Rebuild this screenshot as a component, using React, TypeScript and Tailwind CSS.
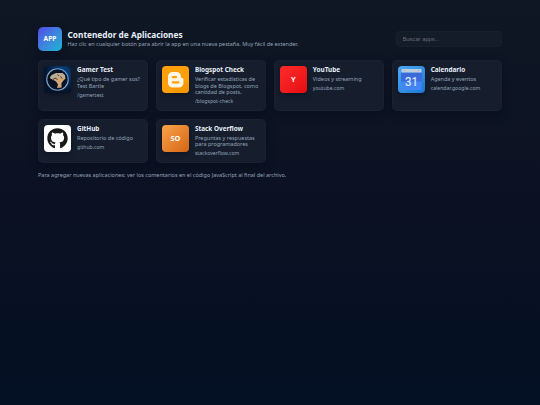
import React from "react";
import { FaGithub } from "react-icons/fa";

const iconBox =
  "flex h-[27px] w-[27px] shrink-0 items-center justify-center overflow-hidden rounded-[4px] text-[7.4px] font-bold text-white shadow-[0_2px_5px_rgba(2,6,23,0.4)]";

function GamerIcon() {
  return (
    <div className={iconBox + " bg-[#03152f]"}>
      <svg viewBox="0 0 54 54" className="h-full w-full">
        <defs>
          <radialGradient id="glow" cx="0.65" cy="0.3" r="0.65">
            <stop offset="0" stopColor="#0d5298" />
            <stop offset="0.65" stopColor="#062850" />
            <stop offset="1" stopColor="#03142a" />
          </radialGradient>
          <linearGradient id="ring" x1="1" y1="0" x2="0" y2="1">
            <stop offset="0" stopColor="#3c8ce0" />
            <stop offset="0.5" stopColor="#8fa9c8" />
            <stop offset="1" stopColor="#6d8db3" />
          </linearGradient>
        </defs>
        <rect width="54" height="54" fill="url(#glow)" />
        <circle cx="27" cy="27" r="21.5" fill="#071325" stroke="url(#ring)" strokeWidth="2.4" />
        <path d="M12 24 C15 18 20 17 25 14 L37 14 L42 19 L43 25 L39 29 L35 34 L35 43 L26 44 L28 37 L24 31 L17 27Z" fill="#d0a678" />
        <path d="M12 24 C13 18 19 16 25 14 L37 14 L42 19 L41 23 L33 22 L25 24 L17 27Z" fill="#b8ab93" />
        <path d="M17 28 L22 24 L27 27 M33 21 L36 25 M27 17 L30 20" fill="none" stroke="#4a382b" strokeWidth="2" />
      </svg>
    </div>
  );
}

function BloggerIcon() {
  return (
    <div className={iconBox + " bg-[#ffa00a]"}>
      <svg viewBox="0 0 54 54" className="h-full w-full">
        <path d="M15 41 L28 54 H54 V37 L42 27 L38 43Z" fill="#f99700" />
        <path
          fillRule="evenodd"
          fill="#fff6e6"
          d="M21 12 H29 A9 9 0 0 1 38 21 V22 Q38 24 40 24 H40.5 Q43 24 43 27 V34 A9 9 0 0 1 34 43 H21 A9 9 0 0 1 12 34 V21 A9 9 0 0 1 21 12Z M21.5 20 A2.2 2.2 0 0 0 21.5 24.4 H28 A2.2 2.2 0 0 0 28 20Z M21.5 30.6 A2.2 2.2 0 0 0 21.5 35 H33 A2.2 2.2 0 0 0 33 30.6Z"
        />
      </svg>
    </div>
  );
}

function CalendarIcon() {
  return (
    <div className={iconBox + " bg-linear-to-br from-[#4caaf5] to-[#1976d2]"}>
      <svg viewBox="0 0 54 54" className="h-full w-full">
        <path d="M7 13 H47 V46 Q47 48 45 48 H9 Q7 48 7 46Z" fill="#4285f4" />
        <path d="M6 13 H48 V31 H6Z" fill="#3b6bda" />
        <path d="M9 6 H45 Q47 6 47 8 V13 H7 V8 Q7 6 9 6Z" fill="#c0cedc" />
        <circle cx="13" cy="9" r="1.2" fill="#8ea7c2" />
        <circle cx="41" cy="9" r="1.2" fill="#8ea7c2" />
        <text x="27" y="40.5" textAnchor="middle" textLength="26" lengthAdjust="spacingAndGlyphs" fill="#dce7fa" stroke="#dce7fa" strokeWidth="0.4" fontFamily="Roboto, sans-serif" fontSize="27" fontWeight="400">31</text>
      </svg>
    </div>
  );
}

interface AppEntry {
  title: string;
  desc: string;
  url: string;
  icon: React.ReactNode;
}

const apps: AppEntry[] = [
  { title: "Gamer Test", desc: "¿Qué tipo de gamer sos? Test Bartle", url: "/gamertest", icon: <GamerIcon /> },
  { title: "Blogspot Check", desc: "Verificar estadísticas de blogs de Blogspot, como cantidad de posts,", url: "/blogspot-check", icon: <BloggerIcon /> },
  { title: "YouTube", desc: "Videos y streaming", url: "youtube.com", icon: <div className={iconBox + " bg-linear-to-br from-[#ff2a2a] to-[#e50b12]"}>Y</div> },
  { title: "Calendario", desc: "Agenda y eventos", url: "calendar.google.com", icon: <CalendarIcon /> },
  { title: "GitHub", desc: "Repositorio de código", url: "github.com", icon: <div className={iconBox + " bg-white"}><FaGithub className="h-[21px] w-[21px] text-[#181818]" /></div> },
  { title: "Stack Overflow", desc: "Preguntas y respuestas para programadores", url: "stackoverflow.com", icon: <div className={iconBox + " bg-linear-to-br from-[#faa34b] to-[#d4650d]"}>SO</div> },
];

function Card({ app }: { app: AppEntry }) {
  return (
    <a className="flex items-start gap-[6px] rounded-[5px] border border-white/[0.02] bg-[#161e2d] p-[5px] shadow-[0_3px_8px_rgba(2,6,23,0.35)]">
      {app.icon}
      <div className="-mr-1 min-w-0 flex-1">
        <h2 className="text-[6.4px] leading-[8.5px] font-bold text-[#e6eef8]">{app.title}</h2>
        <p className="mt-[1.5px] text-[5.46px] leading-[6.6px] text-[#94a3b8]">{app.desc}</p>
        <p className="mt-[2.4px] text-[5.1px] leading-[7px] text-[#94a3b8]">{app.url}</p>
      </div>
    </a>
  );
}

export default function App() {
  return (
    <div className="h-[405px] w-[540px] overflow-hidden bg-linear-to-b from-[#0f1724] via-[#0b1122] to-[#041024] px-[38px] pt-[27px] font-['Noto_Sans',sans-serif]">
      <header className="flex h-6 items-center justify-between">
        <div className="flex items-center gap-[5.5px]">
          <div className="flex h-6 w-6 items-center justify-center rounded-[5px] bg-linear-to-br from-[#4f46e5] to-[#06b6d4] text-[6.6px] font-bold text-white shadow-[0_2px_7px_rgba(2,6,23,0.5)]">APP</div>
          <div>
            <h1 className="text-[8.3px] leading-[10px] font-bold text-[#e6eef8]">Contenedor de Aplicaciones</h1>
            <p className="mt-[0.5px] text-[5.49px] leading-[8px] text-[#94a3b8]">Haz clic en cualquier botón para abrir la app en una nueva pestaña. Muy fácil de extender.</p>
          </div>
        </div>
        <input
          placeholder="Buscar apps..."
          className="h-4 w-[106px] rounded-[4.5px] border border-white/[0.02] bg-[#141c29] px-[5.5px] text-[5.8px] font-['Liberation_Sans',sans-serif] text-[#94a3b8] outline-none placeholder:text-[#686e78]"
        />
      </header>
      <main className="mt-[9px] grid grid-cols-4 grid-rows-[51px_44px] gap-[7.6px]">
        {apps.map((app) => (
          <Card key={app.title} app={app} />
        ))}
      </main>
      <footer className="mt-[8px] text-[5.49px] leading-[8px] text-[#94a3b8]">
        Para agregar nuevas aplicaciones: ver los comentarios en el código JavaScript al final del archivo.
      </footer>
    </div>
  );
}
